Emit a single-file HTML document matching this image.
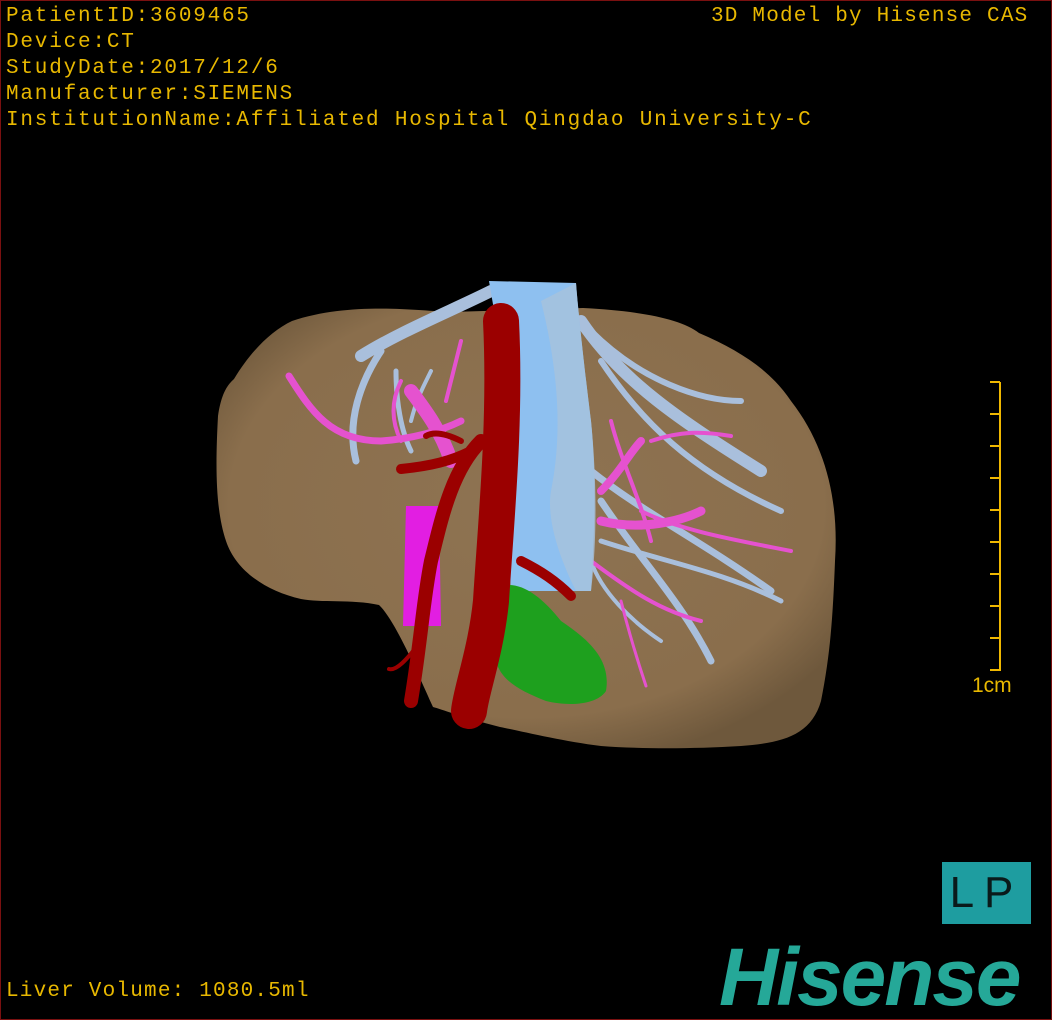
<!DOCTYPE html>
<html><head><meta charset="utf-8"><style>
html,body{margin:0;padding:0;background:#000}
#c{position:relative;width:1050px;height:1018px;border:1px solid #7a1010;background:#000;overflow:hidden;font-family:"Liberation Sans","Noto Sans CJK SC",sans-serif}
.t{position:absolute;color:#e8b800;font-family:"Liberation Mono",monospace;font-size:21px;letter-spacing:1.8px;white-space:nowrap;line-height:26px}
</style></head><body><div id="c">
<div class="t" style="left:5px;top:3px">PatientID:3609465<br>Device:CT<br>StudyDate:2017/12/6<br>Manufacturer:SIEMENS<br>InstitutionName:Affiliated Hospital Qingdao University-C</div>
<div class="t" style="left:710px;top:3px;letter-spacing:1.2px">3D Model by Hisense CAS</div>
<div class="t" style="left:5px;top:978px;letter-spacing:1.2px">Liver Volume: 1080.5ml</div>
<svg style="position:absolute;left:0;top:0" width="1050" height="1018" viewBox="0 0 1050 1018">
<defs><radialGradient id="lg" cx="0.5" cy="0.45" r="0.6"><stop offset="0" stop-color="#8e7352"/><stop offset="0.8" stop-color="#8a6e4c"/><stop offset="1" stop-color="#6e583c"/></radialGradient></defs>
<path d="M291,320 C350,300 420,310 449,311 L582,307 C640,310 680,318 698,332 C740,350 770,370 790,400 C825,445 838,500 834,560 C832,610 830,650 820,700 C810,735 780,742 740,745 C690,748 640,748 600,745 C560,740 520,730 499,726 C460,716 440,708 432,706 C420,680 395,620 378,604 C350,598 320,602 300,598 C265,590 235,570 225,540 C215,510 214,470 217,415 C220,395 225,385 233,378 C250,350 270,330 291,320Z" fill="url(#lg)"/>
<g fill="none" stroke="#a9bfdc" stroke-linecap="round">
<path d="M490,290 C450,310 400,330 360,355" stroke-width="12"/>
<path d="M380,350 C360,380 345,420 355,460" stroke-width="7"/>
<path d="M580,320 C620,380 680,420 760,470" stroke-width="12"/>
<path d="M590,330 C640,380 700,400 740,400" stroke-width="6"/>
<path d="M600,360 C640,420 690,470 780,510" stroke-width="6"/>
<path d="M590,470 C640,510 700,540 770,590" stroke-width="7"/>
<path d="M600,500 C640,560 680,600 710,660" stroke-width="7"/>
<path d="M600,540 C660,560 720,570 780,600" stroke-width="5"/>
<path d="M590,560 C600,590 630,620 660,640" stroke-width="4"/>
<path d="M395,370 C395,400 400,430 410,450" stroke-width="5"/>
<path d="M430,370 C420,390 415,400 410,420" stroke-width="4"/>
</g>
<g fill="none" stroke="#e552cf" stroke-linecap="round">
<path d="M288,375 C310,410 330,440 380,440 C410,438 440,430 460,420" stroke-width="7"/>
<path d="M410,390 C425,410 440,430 450,460" stroke-width="14"/>
<path d="M400,380 C390,400 390,420 400,440" stroke-width="4"/>
<path d="M460,340 C455,360 450,380 445,400" stroke-width="4"/>
<path d="M600,490 C620,470 630,450 640,440" stroke-width="8"/>
<path d="M600,520 C640,530 680,520 700,510" stroke-width="9"/>
<path d="M640,510 C680,530 740,540 790,550" stroke-width="4"/>
<path d="M590,560 C630,590 660,610 700,620" stroke-width="4"/>
<path d="M610,420 C620,460 640,500 650,540" stroke-width="4"/>
<path d="M650,440 C680,430 700,430 730,435" stroke-width="4"/>
<path d="M620,600 C630,640 640,670 645,685" stroke-width="3"/>
</g>
<path d="M488,280 L575,282 C578,320 585,380 590,420 C596,480 593,540 590,590 L510,590 C505,520 505,420 500,350 Z" fill="#8ec0f0"/>
<path d="M540,300 C560,380 560,440 550,490 C545,520 560,560 575,590 L590,590 C596,540 596,480 590,420 C585,380 578,320 575,282 Z" fill="#a8c2dc" opacity="0.8"/>
<path d="M405,505 L438,505 L440,625 L402,625 Z" fill="#e21ee2"/>
<path d="M500,585 C520,580 540,595 560,620 C590,640 610,660 605,690 C595,705 565,705 545,700 C520,690 500,680 495,660 C500,640 505,610 500,585Z" fill="#1ea01e"/>
<g fill="none" stroke="#9b0000" stroke-linecap="round">
<path d="M500,320 C505,420 495,520 490,600 C485,650 470,690 468,710" stroke-width="36"/>
<path d="M480,440 C450,470 440,520 430,560 C422,600 420,640 410,700" stroke-width="14"/>
<path d="M470,450 C450,460 430,465 400,468" stroke-width="10"/>
<path d="M460,440 C440,430 430,432 425,435" stroke-width="6"/>
<path d="M520,560 C540,570 555,580 570,595" stroke-width="10"/>
<path d="M420,640 C405,660 395,670 388,668" stroke-width="4"/>
</g>
<path d="M999,381 V670" stroke="#f0b800" stroke-width="2"/>
<g stroke="#f0b800" stroke-width="2"><path d="M989,381H999M989,413H999M989,445H999M989,477H999M989,509H999M989,541H999M989,573H999M989,605H999M989,637H999M989,669H999"/></g>
</svg>
<div class="t" style="left:971px;top:672px;letter-spacing:0;font-family:'Liberation Sans',sans-serif">1cm</div>
<div style="position:absolute;left:941px;top:861px;width:89px;height:62px;background:#1e9da0;color:#0a1a1a;font-size:44px;line-height:62px;text-align:center;letter-spacing:10px;font-family:'Liberation Sans',sans-serif">LP</div>
<div style="position:absolute;left:718px;top:936px;color:#25a898;font-size:82px;font-weight:bold;font-style:italic;line-height:82px;letter-spacing:-2px;font-family:'Liberation Sans',sans-serif">Hisense</div>
</div></body></html>
